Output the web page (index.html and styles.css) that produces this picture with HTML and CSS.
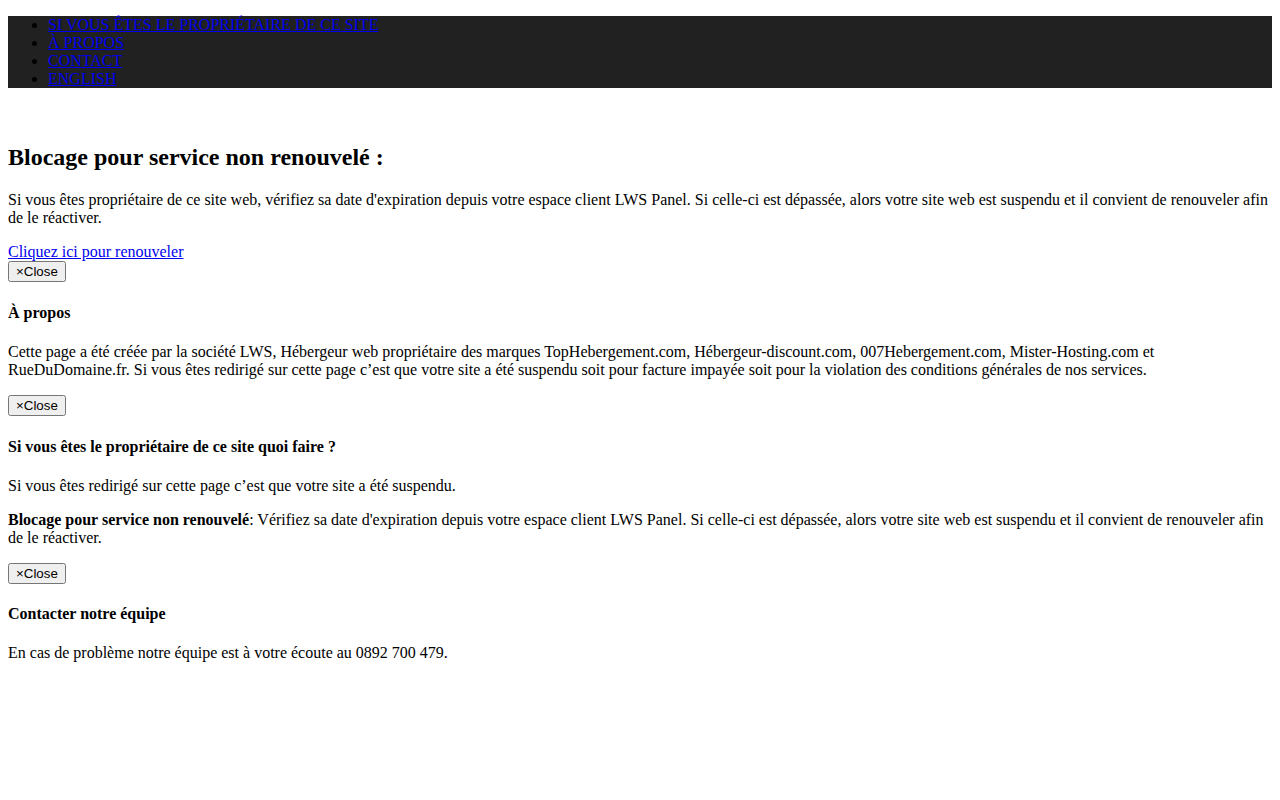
FILE: index.html
```html
<!DOCTYPE html>
<html lang="fr">
<head>
<meta charset="utf-8">
<title>Site suspendu</title>
<link rel="stylesheet" href="styles.css">
</head>
<body class="page">
<nav class="topnav">
  <ul class="topnav-list">
    <li><a class="topnav-link" href="#proprietaire">Si vous êtes le propriétaire de ce site</a></li>
    <li><a class="topnav-link" href="#apropos">À propos</a></li>
    <li><a class="topnav-link" href="#contact">Contact</a></li>
    <li><a class="topnav-link" href="#english">English</a></li>
  </ul>
</nav>
<div class="spacer"></div>
<section class="panel">
  <h2 class="panel-title">Blocage pour service non renouvelé :</h2>
  <p class="panel-text">Si vous êtes propriétaire de ce site web, vérifiez sa date d'expiration depuis votre espace client LWS Panel. Si celle-ci est dépassée, alors votre site web est suspendu et il convient de renouveler afin de le réactiver.</p>
  <div class="panel-link-row"><a class="panel-link" href="#renouveler">Cliquez ici pour renouveler</a></div>
  <div class="btn-row btn-row-first"><button class="close-btn" type="button">×Close</button></div>
</section>
<section class="panel" id="apropos">
  <h4 class="panel-subtitle">À propos</h4>
  <p class="panel-text">Cette page a été créée par la société LWS, Hébergeur web propriétaire des marques TopHebergement.com, Hébergeur-discount.com, 007Hebergement.com, Mister-Hosting.com et RueDuDomaine.fr. Si vous êtes redirigé sur cette page c’est que votre site a été suspendu soit pour facture impayée soit pour la violation des conditions générales de nos services.</p>
  <div class="btn-row"><button class="close-btn" type="button">×Close</button></div>
</section>
<section class="panel" id="proprietaire">
  <h4 class="panel-subtitle">Si vous êtes le propriétaire de ce site quoi faire ?</h4>
  <p class="panel-text">Si vous êtes redirigé sur cette page c’est que votre site a été suspendu.</p>
  <p class="panel-text"><strong>Blocage pour service non renouvelé</strong>: Vérifiez sa date d'expiration depuis votre espace client LWS Panel. Si celle-ci est dépassée, alors votre site web est suspendu et il convient de renouveler afin de le réactiver.</p>
  <div class="btn-row"><button class="close-btn" type="button">×Close</button></div>
</section>
<section class="panel" id="contact">
  <h4 class="panel-subtitle">Contacter notre équipe</h4>
  <p class="panel-text">En cas de problème notre équipe est à votre écoute au 0892 700 479.</p>
</section>
</body>
</html>
```

FILE: styles.css
```css
html {
  background: #ffffff;
}

.page {
  margin: 0 8px 8px;
  font-family: "Liberation Serif", "Times New Roman", serif;
  font-size: 16px;
  color: #000000;
}

.topnav {
  background: #212121;
}

.topnav-list {
  margin: 16px 0;
  padding-left: 40px;
}

.topnav-link {
  color: #0000ee;
  text-transform: uppercase;
  text-decoration: underline;
}

.spacer {
  height: 20px;
}

.panel-title {
  font-size: 24px;
  font-weight: bold;
  margin: 19.92px 0;
}

.panel-subtitle {
  font-size: 16px;
  font-weight: bold;
  margin: 21.28px 0;
}

.panel-text {
  margin: 16px 0;
}

.panel-link-row {
  margin: 0;
}

.panel-link {
  color: #0000ee;
  text-decoration: underline;
}

.btn-row-first {
  padding-bottom: 1px;
}

.close-btn {
  font-family: "Liberation Sans", Arial, sans-serif;
  font-size: 13.333px;
}
```
